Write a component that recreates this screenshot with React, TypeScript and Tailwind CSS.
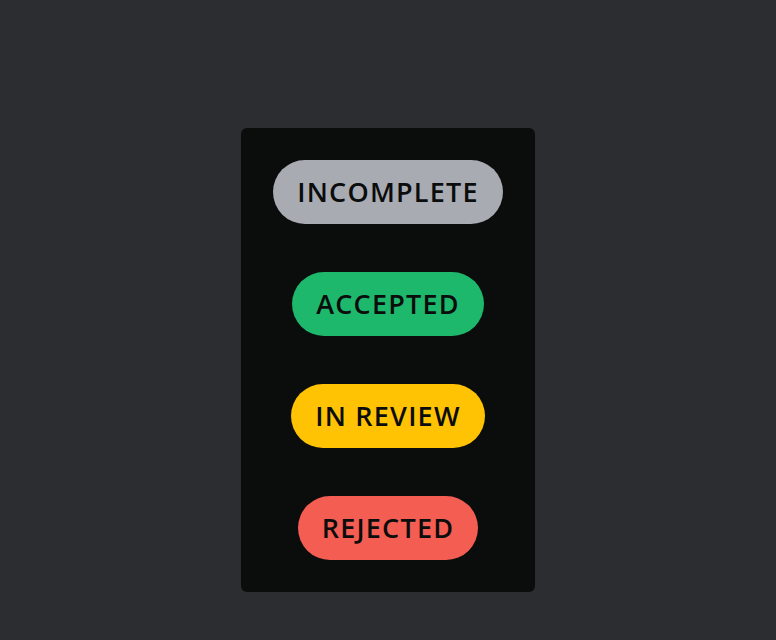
const statuses = [
  { label: "INCOMPLETE", cls: "bg-[#a8abb2]" },
  { label: "ACCEPTED", cls: "bg-[#1db86b]" },
  { label: "IN REVIEW", cls: "bg-[#ffc303]" },
  { label: "REJECTED", cls: "bg-[#f45d52]" },
];

export default function App() {
  return (
    <div className="flex min-h-[640px] justify-center bg-[#2b2d31] pt-[128px] font-['Open_Sans',sans-serif]">
      <div className="flex h-fit flex-col items-center gap-12 rounded-md bg-[#0b0c0c] p-8">
        {statuses.map((s) => (
          <span
            key={s.label}
            className={`flex h-16 items-center rounded-full px-6 text-[27px] font-semibold tracking-[0.045em] text-[#0b0c0c] ${s.cls}`}
          >
            {s.label}
          </span>
        ))}
      </div>
    </div>
  );
}
